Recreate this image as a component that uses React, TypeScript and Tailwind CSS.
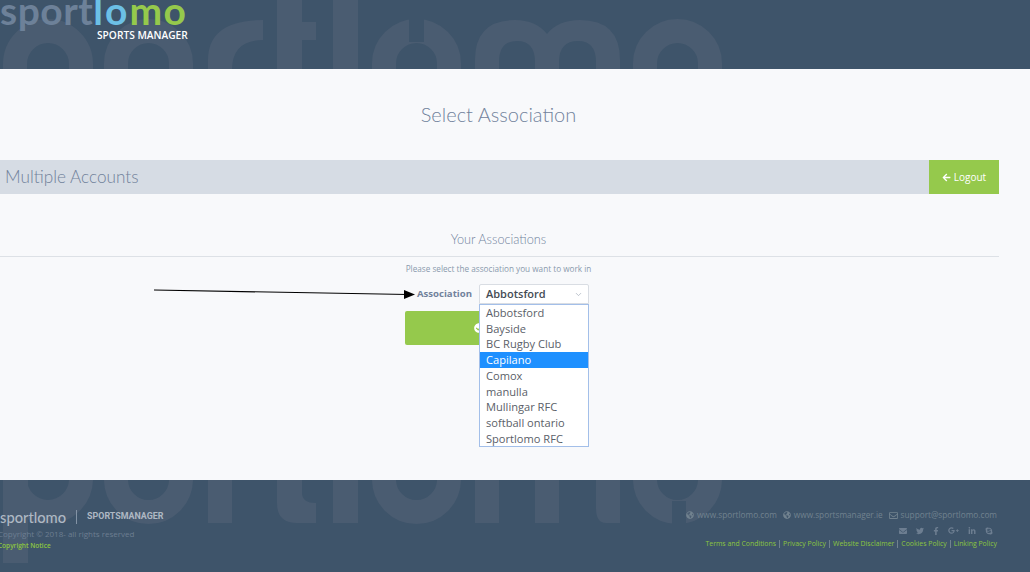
import { FaArrowLeft, FaCheckCircle, FaEnvelope, FaFacebookF, FaGlobeAmericas, FaGooglePlusG, FaLinkedinIn, FaRegEnvelope, FaSkype, FaTwitter } from "react-icons/fa";
import { ChevronDown } from "lucide-react";

const associations = ["Abbotsford", "Bayside", "BC Rugby Club", "Capilano", "Comox", "manulla", "Mullingar RFC", "softball ontario", "Sportlomo RFC"];
const footerLinks = ["Terms and Conditions", "Privacy Policy", "Website Disclaimer", "Cookies Policy", "Linking Policy"];

// big faded logo behind header and footer, top = y of the letters' top edge
function Watermark({ top, height }: { top: number; height: number }) {
  const ring = (x: number, w: number) => <rect x={x + 12} y={top + 11} width={w - 24} height={88} rx={(w - 24) / 2} fill="none" stroke="#4a5c71" strokeWidth={24} />;
  return (
    <svg className="absolute inset-0 w-full" height={height} viewBox={`0 0 1030 ${height}`} aria-hidden="true">
      {ring(3, 90)}
      <rect x={3} y={top + 50} width={25} height={100} fill="#4a5c71" />
      {ring(104, 89)}
      <path d={`M208 ${top + 110} V${top + 40} Q208 ${top} 263 ${top} V${top + 20} Q232 ${top + 20} 232 ${top + 50} V${top + 110} Z`} fill="#4a5c71" />
      <path d={`M277 ${top - 30} H302 V${top + 2} H316 V${top + 20} H302 V${top + 80} Q302 ${top + 90} 316 ${top + 90} V${top + 110} H297 Q277 ${top + 110} 277 ${top + 90} Z`} fill="#4a5c71" />
      <rect x={333} y={top - 30} width={25} height={140} fill="#4a5c71" />
      {ring(372, 89)}
      <rect x={409} y={top - 2} width={15} height={24} fill="#3e546a" />
      <path d={`M475 ${top + 110} V${top + 40} Q475 ${top} 515 ${top} Q536 ${top} 547 ${top + 14} Q558 ${top} 580 ${top} Q620 ${top} 620 ${top + 40} V${top + 110} H606 Q596 ${top + 110} 596 ${top + 95} V${top + 42} Q596 ${top + 21} 578 ${top + 21} Q559 ${top + 21} 559 ${top + 42} V${top + 110} H535 V${top + 42} Q535 ${top + 21} 517 ${top + 21} Q499 ${top + 21} 499 ${top + 42} V${top + 110} Z`} fill="#4a5c71" />
      {ring(633, 89)}
      <rect x={672} y={top + 88} width={14} height={24} fill="#3e546a" />
    </svg>
  );
}

export default function App() {
  return (
    <div className="relative flex h-[572px] w-[1030px] flex-col overflow-hidden bg-[#f8f9fb] font-['Open_Sans',sans-serif]">
      {/* header */}
      <header className="relative h-[69px] shrink-0 overflow-hidden bg-[#3e546a]">
        <Watermark top={20} height={69} />
        <div className="relative flex w-[190px] flex-col">
          <div className="-mt-[4px] flex h-[28px] items-center font-['Lato',sans-serif] text-[39px] leading-[28px] font-bold">
            <span className="tracking-[0.5px] text-[#6d8199]">sport</span>
            <span className="tracking-[2px] text-[#6cc0e6]">lo</span>
            <span className="tracking-[1.5px] text-[#95c94c]">mo</span>
          </div>
          <p className="mt-[5px] pl-[97px] text-[10.2px] leading-[13px] font-semibold whitespace-nowrap text-white">SPORTS MANAGER</p>
        </div>
      </header>

      {/* main content */}
      <main className="flex h-[411px] shrink-0 flex-col">
        <h1 className="mt-[31px] w-[997px] text-center font-['Lato',sans-serif] text-[20px] leading-[28px] font-light text-[#71829b]">Select Association</h1>

        <div className="mt-[32px] flex h-[34px] w-[999px] items-stretch bg-[#d6dce4]">
          <h2 className="flex-1 pl-[5px] font-['Lato',sans-serif] text-[17.2px] leading-[34px] font-light text-[#71829b]">Multiple Accounts</h2>
          <button className="flex w-[70px] items-center justify-center gap-[3px] bg-[#95c94c] text-[10px] text-white">
            <FaArrowLeft className="h-[9px] w-[9px]" />
            Logout
          </button>
        </div>

        <h3 className="mt-[37px] w-[997px] text-center font-['Lato',sans-serif] text-[12.7px] leading-[16px] font-light text-[#71829b]">Your Associations</h3>
        <div className="mt-[9px] h-px w-[999px] bg-[#dde1e6]" />
        <p className="mt-[6px] w-[997px] text-center text-[8.2px] leading-[11px] text-[#8a99ad]">Please select the association you want to work in</p>

        <div className="relative mt-[10px] ml-[405px] w-[184px]">
          <div className="flex items-center justify-end gap-[7px]">
            <label className="text-[9.6px] font-bold text-[#71829b]">Association</label>
            <div className="flex h-[20px] w-[110px] items-center justify-between rounded-t-[2px] border border-[#d9dde3] bg-white pr-[5px] pl-[6px] text-[11px] font-semibold text-[#444b54]">
              Abbotsford
              <ChevronDown className="h-[9px] w-[9px] text-[#aab2bd]" />
            </div>
          </div>

          <button className="mt-[7px] flex h-[34px] w-[184px] items-center rounded-[2px] bg-[#95c94c] pl-[69px] text-white">
            <FaCheckCircle className="h-[10px] w-[10px]" />
          </button>

          {/* open select list */}
          <ul className="absolute top-[20px] left-[74px] w-[110px] border border-[#a3bfe9] bg-white text-[11.1px] leading-[15.7px] text-[#5a6068]">
            {associations.map((name) => (
              <li key={name} className={name === "Capilano" ? "bg-[#1e90ff] pl-[6px] text-white" : "pl-[6px]"}>
                {name}
              </li>
            ))}
          </ul>
        </div>
      </main>

      {/* footer */}
      <footer className="relative flex-1 overflow-hidden bg-[#3e546a]">
        <Watermark top={-67} height={92} />
        <div className="relative flex justify-between pr-[33px]">
          <div className="pt-[29px]">
            <div className="flex h-[16px] items-center">
              <span className="font-['Lato',sans-serif] text-[14.7px] font-medium text-[#aeb8c3]">sportlomo</span>
              <span className="mx-[10px] h-[14px] w-px bg-[#8393a5]" />
              <span className="font-['Roboto',sans-serif] text-[8.9px] font-bold text-[#aeb8c3]">SPORTSMANAGER</span>
            </div>
            <p className="mt-[3px] -ml-[2px] text-[8px] leading-[12px] text-[#6d7e91]">Copyright © 2018- all rights reserved</p>
            <p className="-ml-[2px] text-[6.5px] leading-[12px] font-semibold text-[#8cc63f]">Copyright Notice</p>
          </div>

          <div className="flex flex-col items-end pt-[29px]">
            <div className="flex h-[12px] items-center gap-[6px] text-[8.25px] text-[#71828f]">
              <span className="flex items-center gap-[3px]"><FaGlobeAmericas className="h-[8px] w-[8px]" />www.sportlomo.com</span>
              <span className="flex items-center gap-[3px]"><FaGlobeAmericas className="h-[8px] w-[8px]" />www.sportsmanager.ie</span>
              <span className="flex items-center gap-[3px]"><FaRegEnvelope className="h-[9px] w-[9px]" />support@sportlomo.com</span>
            </div>
            <div className="mt-[4px] flex h-[11px] items-center gap-[9px] pr-[4px] text-[#6d7e91]">
              <FaEnvelope className="h-[8px] w-[8px]" />
              <FaTwitter className="h-[8px] w-[8px]" />
              <FaFacebookF className="h-[8px] w-[6px]" />
              <FaGooglePlusG className="h-[9px] w-[11px]" />
              <FaLinkedinIn className="h-[8px] w-[8px]" />
              <FaSkype className="h-[8px] w-[8px]" />
            </div>
            <div className="mt-[4px] flex items-center text-[6.9px] leading-[8px] text-[#8cc63f]">
              {footerLinks.map((link, i) => (
                <span key={link} className={i === 0 ? "pr-[3px]" : "border-l border-[#71828f] px-[3px] last:pr-0"}>{link}</span>
              ))}
            </div>
          </div>
        </div>
      </footer>

      {/* arrow drawn over the screenshot */}
      <svg className="absolute top-[285px] left-[150px]" width={270} height={15} viewBox="0 0 270 15" aria-hidden="true">
        <line x1={4} y1={5} x2={258} y2={9.5} stroke="#000" strokeWidth={1.2} />
        <polygon points="254,5 265,9.5 254,14" fill="#000" />
      </svg>
    </div>
  );
}
